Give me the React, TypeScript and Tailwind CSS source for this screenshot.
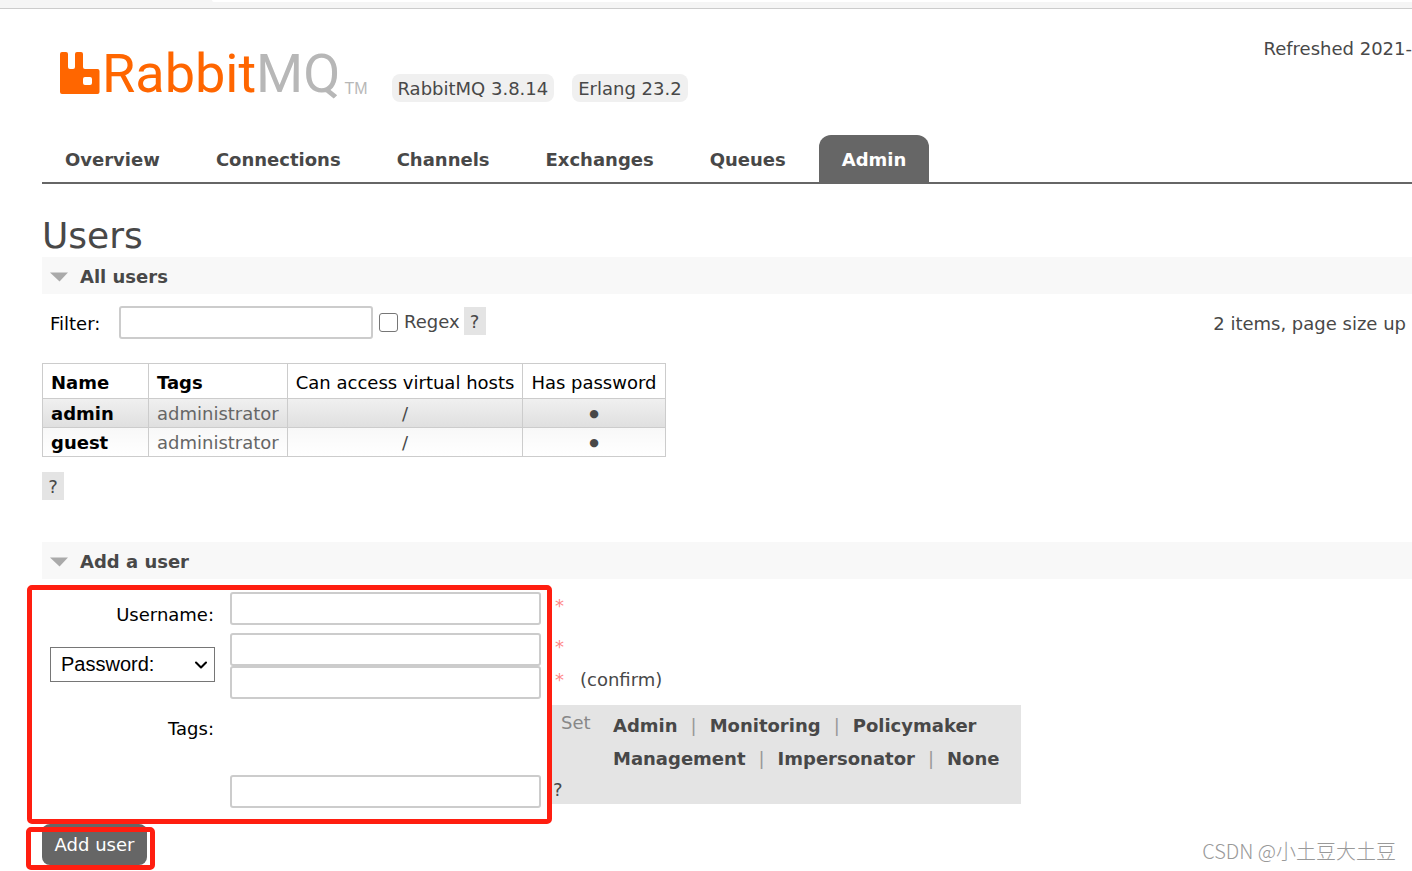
import { Fragment, useState } from "react";
import { ChevronDown } from "lucide-react";

const tabs = ["Overview", "Connections", "Channels", "Exchanges", "Queues", "Admin"];

const users = [
  { name: "admin", tags: "administrator", vhosts: "/" },
  { name: "guest", tags: "administrator", vhosts: "/" },
];

const tagRows = [
  ["Admin", "Monitoring", "Policymaker"],
  ["Management", "Impersonator", "None"],
];

const inputClass =
  "block h-[33px] rounded-[3px] border-2 border-[#ccc] bg-white px-1 text-black outline-none";

function Logo() {
  return (
    <a href="#" aria-label="RabbitMQ" className="flex items-end">
      <svg width="40" height="42" viewBox="0 0 40 42">
        <path
          fill="#f60"
          fillRule="evenodd"
          d="M2 0H6Q8 0 8 2V15Q8 17 10 17H13Q15 17 15 15V2Q15 0 17 0H21Q23 0 23 2V15Q23 17 25 17H37.500Q39.500 17 39.500 19V40Q39.500 42 37.500 42H2Q0 42 0 40V2Q0 0 2 0ZM25 25Q23 25 23 27V31Q23 33 25 33H30Q32 33 32 31V27Q32 25 30 25Z"
        />
      </svg>
      <span className="ml-0.5 h-10 font-[Roboto,sans-serif] text-[54px] leading-10 text-[#f60]">
        Rabbit<span className="text-[#b7b7b7]">MQ</span>
      </span>
      <span className="ml-1 font-['Liberation_Sans',sans-serif] text-base leading-[10px] text-[#b7b7b7]">
        TM
      </span>
    </a>
  );
}

function SectionHeader({ title }: { title: string }) {
  return (
    <h2 className="flex h-[37px] items-center gap-3 bg-[#f8f8f8] pt-0.5 pl-2 font-bold">
      <svg width="18" height="10" viewBox="0 0 18 10">
        <path d="M0 .5H18L9.500 9.500Z" fill="#aaa" />
      </svg>
      {title}
    </h2>
  );
}

function Help() {
  return (
    <button type="button" className="h-7 w-[22px] bg-[#e4e4e4] pt-0.5 text-center leading-[26px]">
      ?
    </button>
  );
}

function UsersTable() {
  return (
    <table className="mt-6 border-collapse [&_td]:border [&_td]:border-[#ccc] [&_td]:px-2 [&_td]:pt-0.5 [&_td]:leading-[26px] [&_th]:border [&_th]:border-[#ccc] [&_th]:px-2">
      <thead className="text-left whitespace-nowrap text-black">
        <tr className="h-[35px]">
          <th className="w-[106px] pt-1">Name</th>
          <th className="w-[138px] pt-1">Tags</th>
          <th className="w-[235px] pt-1 font-normal">Can access virtual hosts</th>
          <th className="w-[142px] pt-1 font-normal">Has password</th>
        </tr>
      </thead>
      <tbody>
        {users.map((user) => (
          <tr
            key={user.name}
            className="h-[29px] bg-linear-to-b from-[#f8f8f8] to-white odd:from-[#f0f0f0] odd:to-[#dfdfdf]"
          >
            <td className="font-bold text-black">{user.name}</td>
            <td className="text-[#666]">{user.tags}</td>
            <td className="text-center">{user.vhosts}</td>
            <td className="text-center text-[11px]">●</td>
          </tr>
        ))}
      </tbody>
    </table>
  );
}

function AddUserForm() {
  return (
    <form className="relative pt-[13px]" onSubmit={(e) => e.preventDefault()}>
      <div className="grid grid-cols-[188px_311px_1fr]">
        <label htmlFor="username" className="pt-3 pr-4 text-right leading-[21px] text-black">
          Username:
        </label>
        <input id="username" className={inputClass} />
        <span className="pl-3.5 text-[#f88]">*</span>

        <div className="mt-2 flex items-center pl-2">
          <div className="relative mb-1">
            <select
              aria-label="Password type"
              className="block h-[35px] w-[165px] appearance-none border border-[#767676] bg-white pl-2.5 font-['Liberation_Sans',sans-serif] text-xl text-black"
            >
              <option>Password:</option>
              <option>Hash:</option>
              <option>No password</option>
            </select>
            <ChevronDown
              size={20}
              strokeWidth={2.5}
              className="pointer-events-none absolute top-2 right-1 text-black"
            />
          </div>
        </div>
        <div className="mt-2">
          <input type="password" aria-label="Password" className={`${inputClass} w-full`} />
          <input type="password" aria-label="Confirm password" className={`${inputClass} w-full`} />
        </div>
        <div className="mt-2 pl-3.5">
          <p className="h-[33px] text-[#f88]">*</p>
          <p className="flex h-[33px] gap-4">
            <span className="text-[#f88]">*</span>
            (confirm)
          </p>
        </div>

        <label htmlFor="tags" className="mt-1.5 pt-2.5 pr-4 text-right text-black">
          Tags:
        </label>
        <input id="tags" className={`${inputClass} mt-1.5 self-end`} />
        <div className="mt-1.5 mb-1 ml-1.5 w-[474px] bg-[#e4e4e4] pt-1 pl-3.5 leading-[33px]">
          <div className="flex">
            <span className="w-[52px] leading-7 text-[#888]">Set</span>
            <div>
              {tagRows.map((row) => (
                <div key={row[0]} className="flex gap-[13px]">
                  {row.map((tag, i) => (
                    <Fragment key={tag}>
                      {i > 0 && <span className="text-[#999]">|</span>}
                      <button type="button" className="font-bold">
                        {tag}
                      </button>
                    </Fragment>
                  ))}
                </div>
              ))}
            </div>
          </div>
          <button type="button" className="-ml-2 block h-[29px] leading-[29px]">
            ?
          </button>
        </div>
      </div>
      <button type="submit" className="mt-4 block h-[41px] w-[105px] rounded-lg bg-[#666] text-white">
        Add user
      </button>

      {/* Highlight frames */}
      <div className="pointer-events-none absolute top-1.5 -left-[15px] h-[239px] w-[525px] rounded-[5px] border-5 border-[#ff1e10]" />
      <div className="pointer-events-none absolute -bottom-[5px] -left-4 h-[43px] w-[129px] rounded-[5px] border-5 border-[#ff1e10]" />
    </form>
  );
}

export default function App() {
  const [active, setActive] = useState("Admin");

  return (
    <div className="relative min-h-screen overflow-hidden bg-white font-[Verdana,'DejaVu_Sans',sans-serif] text-lg leading-7 text-[#484848]">
      <div className="h-[9px] border-b border-[#ccc] bg-[#f5f5f5] pl-[212px]">
        <div className="h-0.5 rounded-bl bg-white" />
      </div>

      <main className="pl-[42px]">
        <header className="flex h-[126px] items-start justify-between">
          <div className="flex items-end pt-[43px] pl-[18px]">
            <Logo />
            <div className="ml-6 flex gap-[18px]">
              <span className="-mb-2 rounded-lg bg-[#f0f0f0] px-1.5 pt-0.5 leading-[26px]">RabbitMQ 3.8.14</span>
              <span className="-mb-2 rounded-lg bg-[#f0f0f0] px-1.5 pt-0.5 leading-[26px]">Erlang 23.2</span>
            </div>
          </div>
          <span className="pt-[26px]">Refreshed 2021-</span>
        </header>

        <nav className="flex gap-2.5 border-b-2 border-[#666]">
          {tabs.map((tab) => (
            <a
              key={tab}
              href="#"
              onClick={() => setActive(tab)}
              className={`h-[47px] rounded-t-xl px-[23px] leading-[50px] font-bold ${
                tab === active ? "bg-[#666] text-white" : ""
              }`}
            >
              {tab}
            </a>
          ))}
        </nav>

        <h1 className="mt-[31px] mb-px text-4xl leading-[41px]">Users</h1>
        <SectionHeader title="All users" />

        <div className="mt-3 flex h-[33px] items-center pl-2">
          <label htmlFor="filter" className="w-[69px] pt-0.5 text-black">
            Filter:
          </label>
          <input id="filter" className={`${inputClass} w-[254px]`} />
          <input
            id="regex"
            type="checkbox"
            className="mx-1.5 size-[19px] appearance-none rounded-[3px] border border-[#767676] bg-white checked:bg-[#0075ff]"
          />
          <div className="mb-1 flex gap-1">
            <label htmlFor="regex" className="pt-0.5 leading-[26px]">
              Regex
            </label>
            <Help />
          </div>
          <span className="mr-1.5 ml-auto pt-0.5">2 items, page size up</span>
        </div>

        <UsersTable />
        <div className="mt-[15px] mb-[42px] flex">
          <Help />
        </div>

        <SectionHeader title="Add a user" />
        <AddUserForm />
      </main>

      <span className="absolute right-4 bottom-1.5 font-['Noto_Sans_CJK_SC',sans-serif] text-xl leading-7 font-light text-[#999]">
        CSDN @小土豆大土豆
      </span>
    </div>
  );
}
